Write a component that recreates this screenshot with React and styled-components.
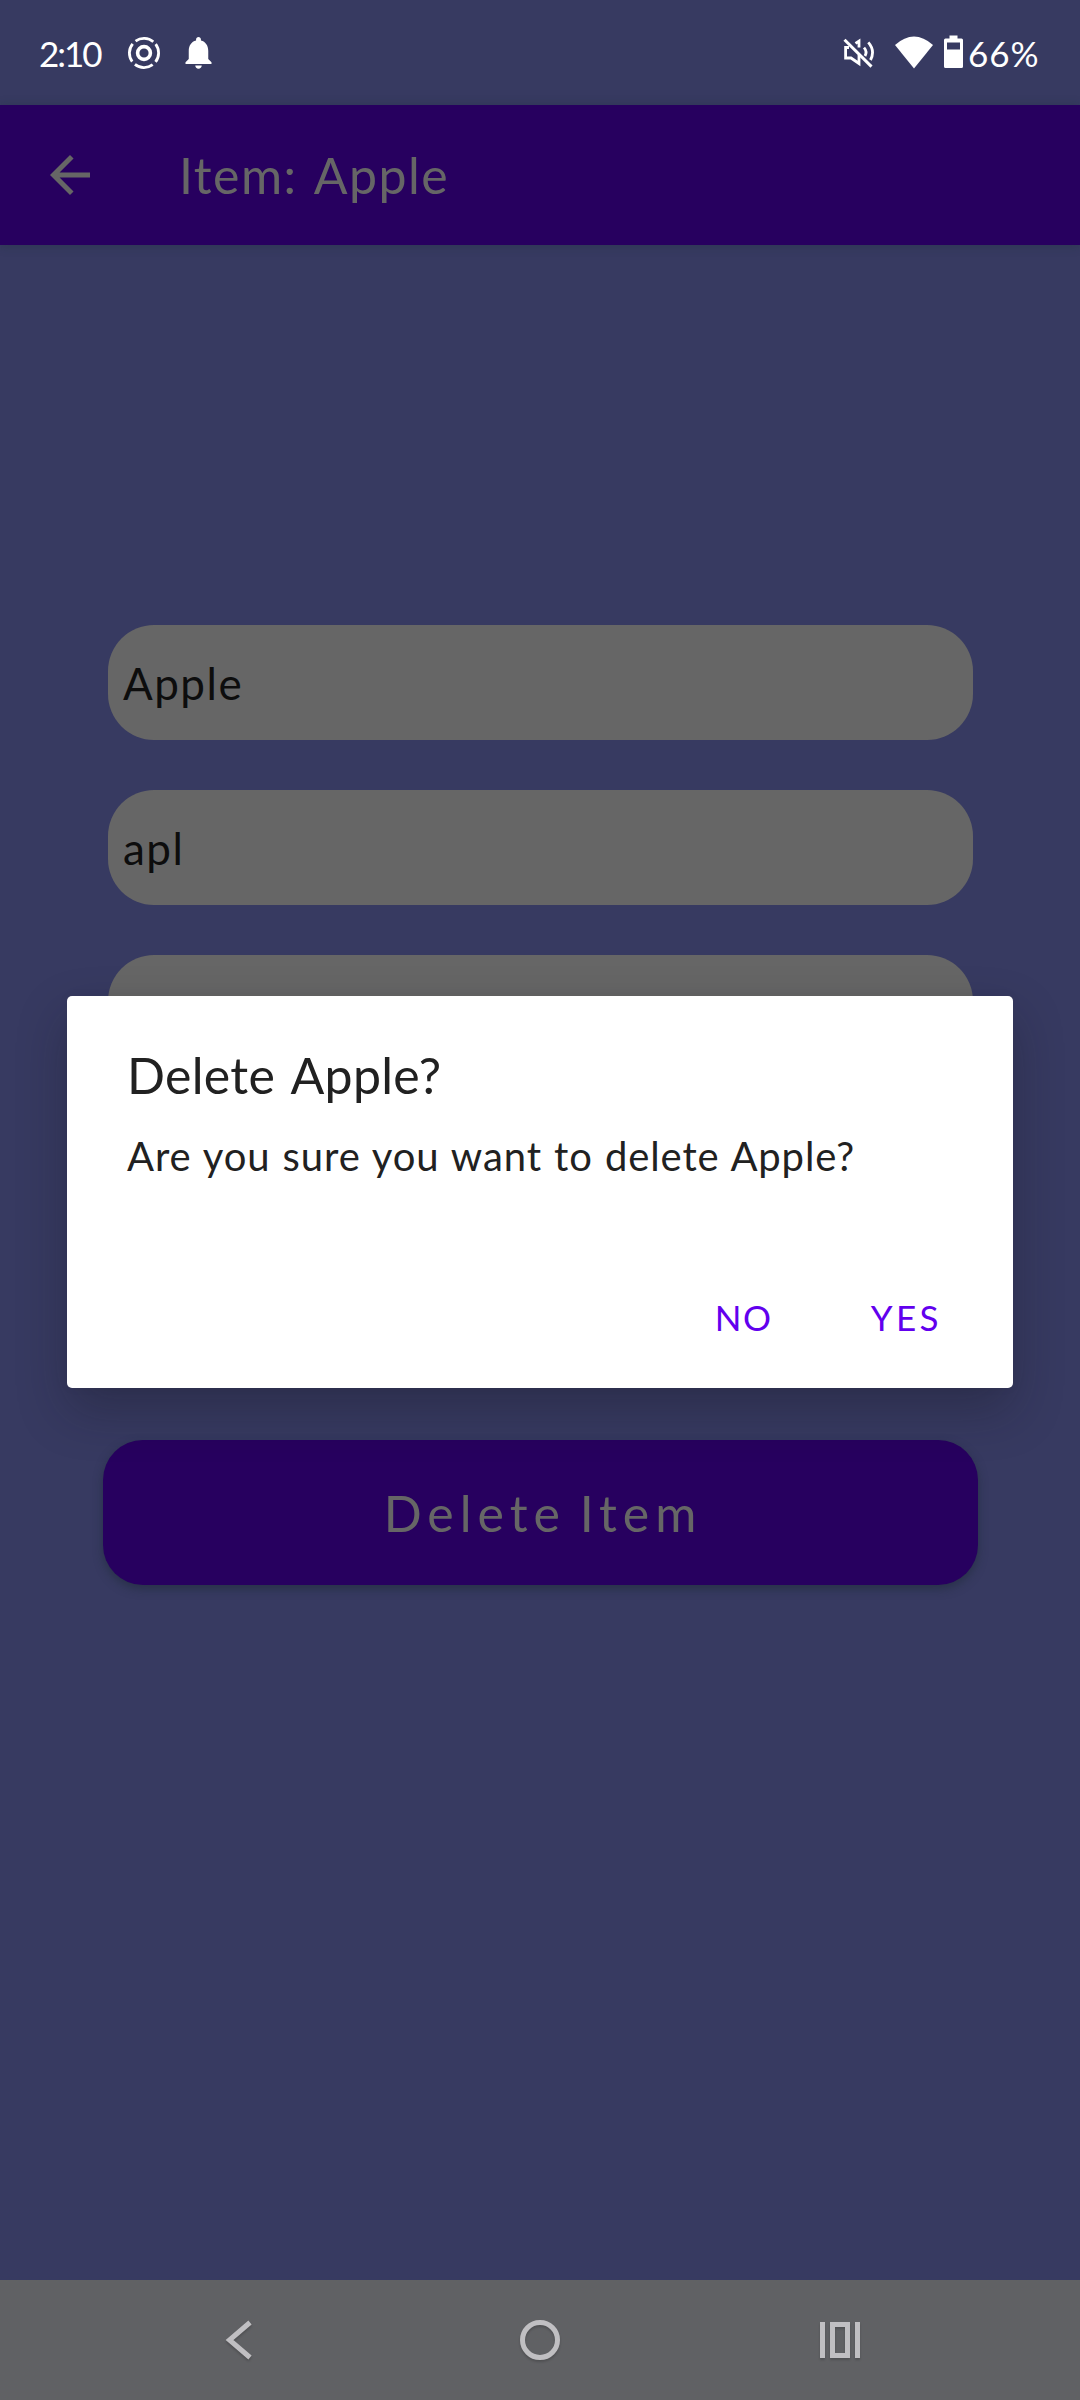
import React from 'react';
import styled, { createGlobalStyle } from 'styled-components';

const GlobalStyle = createGlobalStyle`
  * { box-sizing: border-box; }
  body { margin: 0; background: #373a61; }
`;

const Screen = styled.div`
  position: relative;
  display: flex;
  flex-direction: column;
  width: 1080px;
  height: 2400px;
  overflow: hidden;
  background: #373a61;
  font-family: Lato, "Open Sans", sans-serif;
`;

const StatusBar = styled.header`
  display: flex;
  align-items: center;
  height: 105px;
  padding: 0 43px 0 39px;
  color: #fff;
`;

const StatusText = styled.span`
  width: ${(p) => p.$width}px;
  padding-left: ${(p) => p.$indent || 0}px;
  font-size: 35px;
  line-height: 42px;
  white-space: nowrap;
  letter-spacing: ${(p) => p.$spacing}px;
`;

const StatusIcon = styled.svg`
  display: block;
  flex: none;
  margin-left: ${(p) => p.$gap || 0}px;
`;

const Spacer = styled.div`
  flex: 1;
`;

const AppBar = styled.div`
  display: flex;
  align-items: center;
  gap: 79px;
  height: 140px;
  padding-left: 40px;
  background: #27005f;
  color: #666;
  box-shadow: 0 1px 9px rgba(30, 50, 60, 0.4);
`;

const AppTitle = styled.h1`
  margin: 0;
  font-size: 50px;
  font-weight: 400;
  line-height: 60px;
  letter-spacing: 1.5px;
  word-spacing: 3.5px;
`;

const Form = styled.main`
  flex: 1;
  display: flex;
  flex-direction: column;
  align-items: center;
  gap: 50px;
  padding: 380px 0 0 1px;
`;

const Field = styled.div`
  display: flex;
  align-items: center;
  width: 865px;
  height: 115px;
  padding: 0 15px;
  border-radius: 46px;
  background: #666;
  color: #0d0d0d;
  font-size: 44px;
  letter-spacing: 1.5px;
`;

const DeleteButton = styled.button`
  width: 875px;
  height: 145px;
  margin-top: 320px;
  padding: 0 0 0 5px;
  border: 0;
  border-radius: 40px;
  background: #27005f;
  color: #666;
  font: 400 50px/60px Lato, sans-serif;
  letter-spacing: 6px;
  word-spacing: -5px;
  box-shadow: 0 4px 10px rgba(25, 40, 50, 0.5);
`;

const NavBar = styled.nav`
  display: flex;
  align-items: center;
  justify-content: center;
  height: 120px;
  background: #606164;
`;

const NavItem = styled.div`
  display: flex;
  justify-content: center;
  width: 300px;

  svg {
    filter: drop-shadow(0 2px 1px rgba(0, 0, 0, 0.18));
  }
`;

const Overlay = styled.div`
  position: absolute;
  inset: 0;
  display: flex;
  justify-content: center;
  align-items: flex-start;
  padding-top: 996px;
`;

const Dialog = styled.section`
  display: flex;
  flex-direction: column;
  width: 946px;
  height: 392px;
  padding: 49px 60px 0;
  border-radius: 5px;
  background: #fff;
  color: #212121;
  box-shadow: 0 22px 50px rgba(20, 20, 30, 0.3), 0 0 12px rgba(20, 20, 30, 0.04);
`;

const DialogTitle = styled.h2`
  margin: 0;
  font-size: 50px;
  font-weight: 400;
  line-height: 60px;
  letter-spacing: 0.3px;
  word-spacing: 4px;
`;

const DialogMessage = styled.p`
  margin: 26px 0 0;
  font-size: 40px;
  line-height: 50px;
  white-space: nowrap;
  letter-spacing: 0.9px;
  word-spacing: 1px;
`;

const DialogActions = styled.div`
  display: flex;
  justify-content: flex-end;
  gap: 98px;
  margin-top: 82px;
  padding-right: 11px;
`;

const Action = styled.button`
  padding: 0;
  border: 0;
  background: none;
  color: #6200ee;
  font: 400 35px/108px Lato, sans-serif;
  letter-spacing: ${(p) => p.$spacing}px;
`;

const fields = ['Apple', 'apl', ''];

export default function App() {
  return (
    <Screen>
      <GlobalStyle />
      <StatusBar>
        <StatusText $width={88} $spacing={-2}>2:10</StatusText>
        <StatusIcon width="34" height="34" viewBox="-17 -17 34 34" fill="none" stroke="#fff">
          <circle r="14.6" strokeWidth="2.8" strokeDasharray="18.9 4.03" transform="rotate(-37)" />
          <circle r="6.4" strokeWidth="3.6" />
        </StatusIcon>
        <StatusIcon $gap={18} width="39" height="39" viewBox="0 0 24 24" fill="#fff">
          <path d="M12 22c1.1 0 2-.9 2-2h-4c0 1.1.89 2 2 2zm6-6v-5c0-3.07-1.64-5.64-4.5-6.32V4c0-.83-.67-1.5-1.5-1.5s-1.5.67-1.5 1.5v.68C7.63 5.36 6 7.92 6 11v5l-2 2v1h16v-1l-2-2z" />
        </StatusIcon>
        <Spacer />
        <StatusIcon width="34" height="36" viewBox="842 35 34 36" fill="none" stroke="#fff" strokeWidth="2.8">
          <path d="M844.5 39.8L871.5 66.6" strokeWidth="3" />
          <path d="M849 47.5H845.6V58H851L859 63.5V55M855.5 43.3L859 41V47.5" />
          <path d="M864 47.6Q867.5 51.5 865 56" />
          <path d="M868.3 42.3Q875.5 50.5 870.5 60" />
        </StatusIcon>
        <StatusIcon $gap={18} width="40" height="34" viewBox="894 35.5 40 34" fill="#fff">
          <path d="M895 44.5Q914 27.5 933 44.5L914 68Z" />
        </StatusIcon>
        <StatusIcon $gap={9} width="21" height="35" viewBox="943 35.5 21 35" fill="#fff">
          <path fillRule="evenodd" d="M949.5 36H957.5V39H961.5Q963 39 963 40.5V67Q963 68.5 961.5 68.5H945.5Q944 68.5 944 67V40.5Q944 39 945.5 39H949.5ZM947 43V50H960V43Z" />
        </StatusIcon>
        <StatusText $width={73} $indent={4} $spacing={0.9}>66%</StatusText>
      </StatusBar>
      <AppBar>
        <svg width="60" height="60" viewBox="0 0 24 24" fill="#666">
          <path d="M20 11H7.83l5.59-5.59L12 4l-8 8 8 8 1.41-1.41L7.83 13H20v-2z" />
        </svg>
        <AppTitle>Item: Apple</AppTitle>
      </AppBar>
      <Form>
        {fields.map((text, i) => (
          <Field key={i}>{text}</Field>
        ))}
        <DeleteButton>Delete Item</DeleteButton>
      </Form>
      <NavBar>
        <NavItem>
          <svg width="40" height="44" viewBox="220 2318 40 44" fill="none" stroke="#c0bfc2" strokeWidth="5">
            <path d="M250 2322.5L229.5 2340L250 2357.5" />
          </svg>
        </NavItem>
        <NavItem>
          <svg width="44" height="44" viewBox="-22 -22 44 44" fill="none" stroke="#c0bfc2" strokeWidth="5">
            <circle r="17.5" />
          </svg>
        </NavItem>
        <NavItem>
          <svg width="44" height="44" viewBox="-22 -22 44 44" fill="none" stroke="#c0bfc2" strokeWidth="5">
            <path d="M-17.5 -18V18M17.5 -18V18M-7.5 -15.5H7.5V15.5H-7.5Z" />
          </svg>
        </NavItem>
      </NavBar>
      <Overlay>
        <Dialog>
          <DialogTitle>Delete Apple?</DialogTitle>
          <DialogMessage>Are you sure you want to delete Apple?</DialogMessage>
          <DialogActions>
            <Action $spacing={1.6}>NO</Action>
            <Action $spacing={3.4}>YES</Action>
          </DialogActions>
        </Dialog>
      </Overlay>
    </Screen>
  );
}
